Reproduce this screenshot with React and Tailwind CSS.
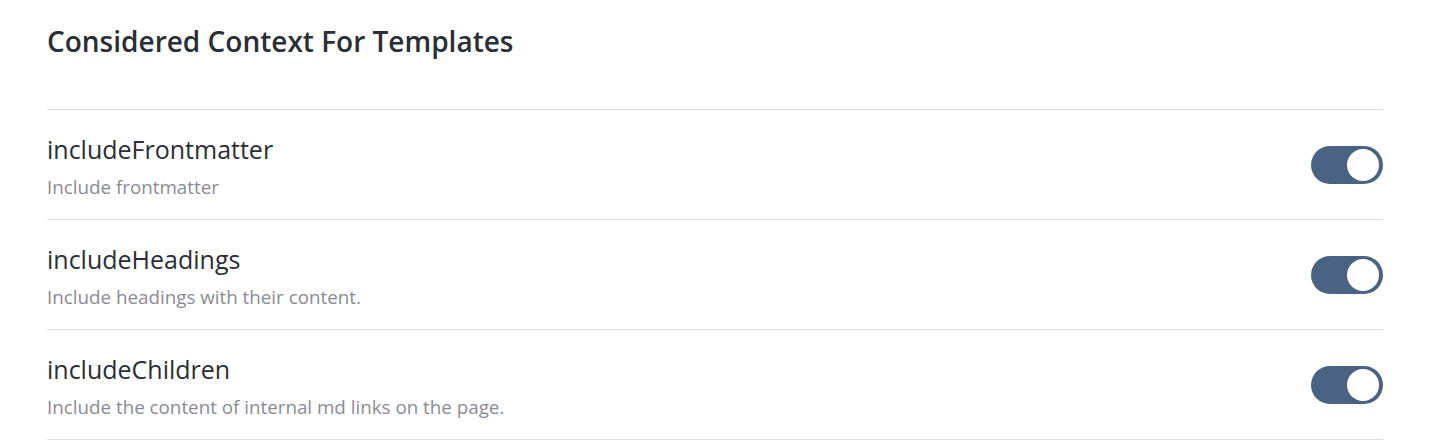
export default function App() {
  const rows = [
    { name: "includeFrontmatter", desc: "Include frontmatter" },
    { name: "includeHeadings", desc: "Include headings with their content." },
    { name: "includeChildren", desc: "Include the content of internal md links on the page." },
  ];
  return (
    <div className="w-[1432px] h-[447px] bg-white pl-[47px] pr-[49px] pt-[21px]" style={{ fontFamily: '"Open Sans", "Noto Sans", sans-serif' }}>
      <h1 className="text-[28px] leading-[40px] font-semibold text-[#2a2e36] h-[88px]">Considered Context For Templates</h1>
      <div className="border-t border-[#dcdde3]">
        {rows.map((r) => (
          <div key={r.name} className="h-[110px] border-b border-[#dcdde3] flex items-center justify-between">
            <div className="flex flex-col pt-[3px]">
              <div className="text-[25px] leading-[30px] text-[#2a2e36]">{r.name}</div>
              <div className="text-[18.8px] leading-[24px] mt-[11px] text-[#8a8a96]">{r.desc}</div>
            </div>
            <div className="w-[72px] h-[38px] rounded-full bg-[#4a6383] flex items-center justify-end pr-[4px]">
              <div className="w-[32px] h-[32px] rounded-full bg-white"></div>
            </div>
          </div>
        ))}
      </div>
    </div>
  );
}
